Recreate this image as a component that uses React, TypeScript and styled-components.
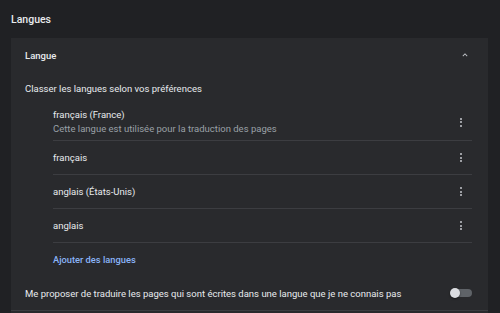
import styled, { createGlobalStyle } from 'styled-components';

const GlobalStyle = createGlobalStyle`
    html, body {
        margin: 0;
        padding: 0;
        background: #202124;
    }
    body {
        font-family: Roboto, "Liberation Sans", sans-serif;
        color: #e8eaed;
        -webkit-font-smoothing: antialiased;
    }
`;

const Page = styled.div`
    width: 500px;
    height: 313px;
    overflow: hidden;
    background: #202124;
`;
const PageTitle = styled.h2`
    margin: 0;
    height: 38px;
    padding-left: 11px;
    display: flex;
    align-items: center;
    font-size: 10.5px;
    font-weight: 500;
    color: #e8eaed;
`;
const Card = styled.section`
    margin-left: 11px;
    width: 477px;
    background: #292a2d;
    padding-bottom: 20px;
`;
const CardHeader = styled.div`
    height: 34px;
    padding: 0 16px 0 14px;
    display: flex;
    align-items: center;
    justify-content: space-between;
    font-size: 9.5px;
    font-weight: 500;
`;
const Label = styled.div`
    height: 32px;
    padding-left: 14px;
    display: flex;
    align-items: center;
    font-size: 9.5px;
    font-weight: 400;
`;
const List = styled.div`
    margin: 0 16px 0 42px;
`;
const Row = styled.div<{ $tall?: boolean }>`
    height: ${(p) => (p.$tall ? '36px' : '33px')};
    display: flex;
    align-items: center;
    justify-content: space-between;
    border-bottom: 1px solid #3c3d41;
`;
const RowText = styled.div`
    display: flex;
    flex-direction: column;
    font-size: 9.5px;
    line-height: 14px;
`;
const Secondary = styled.span`
    color: #9aa0a6;
`;
const Kebab = styled.div`
    width: 12px;
    margin-right: 5px;
    display: flex;
    flex-direction: column;
    align-items: center;
    gap: 1.5px;
    & > span {
        width: 2px;
        height: 2px;
        border-radius: 50%;
        background: #c4c7cc;
    }
`;
const AddLink = styled.div`
    height: 33px;
    display: flex;
    align-items: center;
    font-size: 9.3px;
    font-weight: 500;
    color: #8ab4f8;
`;
const ToggleRow = styled.div`
    height: 34px;
    padding: 0 16px 0 14px;
    display: flex;
    align-items: center;
    justify-content: space-between;
    font-size: 9.5px;
    border-bottom: 1px solid #3c3d41;
`;
const Toggle = styled.div`
    position: relative;
    width: 22px;
    height: 10px;
    display: flex;
    align-items: center;
    &::before {
        content: '';
        position: absolute;
        left: 2px;
        right: 0;
        height: 8px;
        border-radius: 4px;
        background: #5f6368;
    }
    &::after {
        content: '';
        position: absolute;
        left: 0;
        width: 10px;
        height: 10px;
        border-radius: 50%;
        background: #dadce0;
        box-shadow: 0 1px 2px rgba(0, 0, 0, 0.5);
    }
`;

const languages = [
    { name: 'français (France)', note: 'Cette langue est utilisée pour la traduction des pages' },
    { name: 'français' },
    { name: 'anglais (États-Unis)' },
    { name: 'anglais' },
];

function Chevron() {
    return (
        <svg width="10" height="10" viewBox="0 0 24 24" style={{ marginRight: 2 }}>
            <path d="M7.4 15.4 12 10.8l4.6 4.6L18 14l-6-6-6 6z" fill="#c4c7cc" />
        </svg>
    );
}

export default function App() {
    return (
        <Page>
            <GlobalStyle />
            <PageTitle>Langues</PageTitle>
            <Card>
                <CardHeader>
                    Langue
                    <Chevron />
                </CardHeader>
                <Label>Classer les langues selon vos préférences</Label>
                <List>
                    {languages.map((l) => (
                        <Row key={l.name} $tall={!!l.note}>
                            <RowText>
                                <span>{l.name}</span>
                                {l.note && <Secondary>{l.note}</Secondary>}
                            </RowText>
                            <Kebab>
                                <span />
                                <span />
                                <span />
                            </Kebab>
                        </Row>
                    ))}
                    <AddLink>Ajouter des langues</AddLink>
                </List>
                <ToggleRow>
                    Me proposer de traduire les pages qui sont écrites dans une langue que je ne connais pas
                    <Toggle />
                </ToggleRow>
            </Card>
        </Page>
    );
}
